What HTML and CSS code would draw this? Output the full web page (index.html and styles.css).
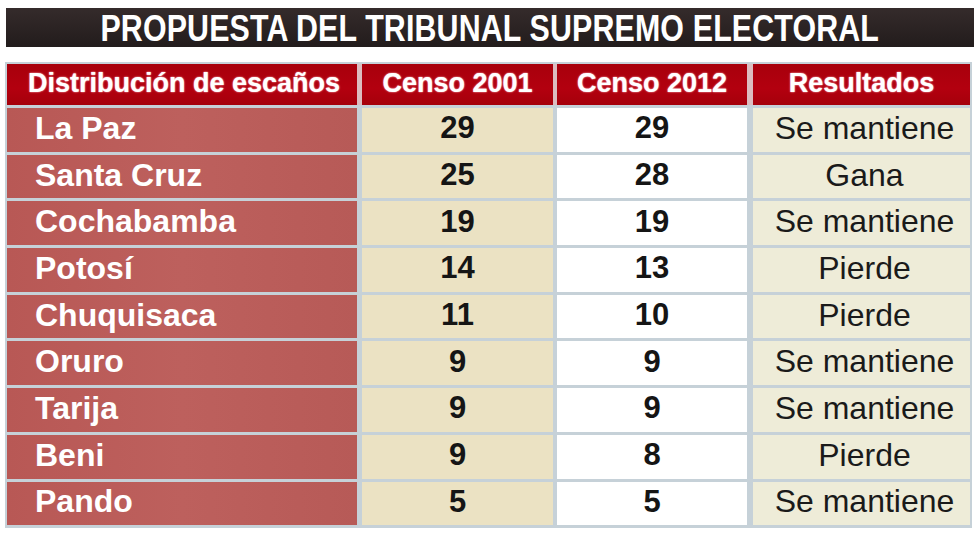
FILE: index.html
```html
<!DOCTYPE html>
<html lang="es">
<head>
<meta charset="utf-8">
<title>Propuesta del Tribunal Supremo Electoral</title>
<link rel="stylesheet" href="styles.css">
</head>
<body>
<div class="page">
  <div class="title-bar"><span class="title">PROPUESTA DEL TRIBUNAL SUPREMO ELECTORAL</span></div>
  <div class="table">
    <div class="row head">
      <div class="cell h name">Distribución de escaños</div>
      <div class="cell h">Censo 2001</div>
      <div class="cell h">Censo 2012</div>
      <div class="cell h">Resultados</div>
    </div>
    <div class="body">
      <div class="cell dep">La Paz</div><div class="cell c1">29</div><div class="cell c2">29</div><div class="cell res">Se mantiene</div>
      <div class="cell dep">Santa Cruz</div><div class="cell c1">25</div><div class="cell c2">28</div><div class="cell res">Gana</div>
      <div class="cell dep">Cochabamba</div><div class="cell c1">19</div><div class="cell c2">19</div><div class="cell res">Se mantiene</div>
      <div class="cell dep">Potosí</div><div class="cell c1">14</div><div class="cell c2">13</div><div class="cell res">Pierde</div>
      <div class="cell dep">Chuquisaca</div><div class="cell c1">11</div><div class="cell c2">10</div><div class="cell res">Pierde</div>
      <div class="cell dep">Oruro</div><div class="cell c1">9</div><div class="cell c2">9</div><div class="cell res">Se mantiene</div>
      <div class="cell dep">Tarija</div><div class="cell c1">9</div><div class="cell c2">9</div><div class="cell res">Se mantiene</div>
      <div class="cell dep">Beni</div><div class="cell c1">9</div><div class="cell c2">8</div><div class="cell res">Pierde</div>
      <div class="cell dep">Pando</div><div class="cell c1">5</div><div class="cell c2">5</div><div class="cell res">Se mantiene</div>
    </div>
  </div>
</div>
</body>
</html>
```

FILE: styles.css
```css
* { box-sizing: border-box; }
html, body { margin: 0; padding: 0; background: #ffffff; }
body { width: 980px; height: 538px; overflow: hidden; font-family: "Liberation Sans", Arial, sans-serif; }

.page { padding-top: 8px; }

.title-bar {
  margin: 0 6px;
  height: 39px;
  background: linear-gradient(#352b2b, #221c1c);
  display: flex;
  align-items: center;
  justify-content: center;
  overflow: hidden;
}
.title {
  display: inline-block;
  color: #ffffff;
  font-weight: bold;
  font-size: 37px;
  line-height: 39px;
  white-space: nowrap;
  transform: scaleX(0.82);
  letter-spacing: 0.2px;
  padding-top: 1px;
}

.table {
  margin: 15px 8px 0 5px;
  padding: 2px 2px 3px 2px;
  background: #c6d1d8;
  width: 967px;
}

.row, .body {
  display: grid;
  grid-template-columns: 355px 195px 196px 217px;
  column-gap: 0;
}
.row.head { background: #c6d1d8; }
.body {
  grid-auto-rows: 43.7px;
  row-gap: 3px;
  margin-top: 3px;
}
.body .dep { margin-right: 5px; }
.body .c1 { margin-right: 4px; }
.body .c2 { margin-right: 6px; }

.cell {
  display: flex;
  align-items: center;
  justify-content: center;
  padding-bottom: 3px;
}
.h {
  height: 41px;
  background: linear-gradient(#a8000c, #b3000f 60%, #a5000b);
  color: #ffffff;
  font-weight: bold;
  font-size: 27px;
  text-shadow: 0 0 2px #f3a3ad, 0 0 1px #f3a3ad;
  border-right: 5px solid #dcbcc0;
}
.h.name { justify-content: flex-start; padding-left: 21px; }
.h:nth-child(2) { border-right-width: 4px; }
.h:nth-child(3) { border-right-width: 6px; }
.h:nth-child(4) { border-right: 0; }

.dep {
  justify-content: flex-start;
  padding-left: 28px;
  background: linear-gradient(90deg, #b85855, #bd605d 50%, #b75a57);
  color: #ffffff;
  font-weight: bold;
  font-size: 32px;
}
.c1 {
  background: #ebe2c3;
  color: #151515;
  font-weight: bold;
  font-size: 31px;
}
.c2 {
  background: #ffffff;
  color: #151515;
  font-weight: bold;
  font-size: 31px;
}
.res {
  background: #eeecd8;
  color: #1a1a1a;
  font-size: 32px;
  padding-left: 6px;
}
```
